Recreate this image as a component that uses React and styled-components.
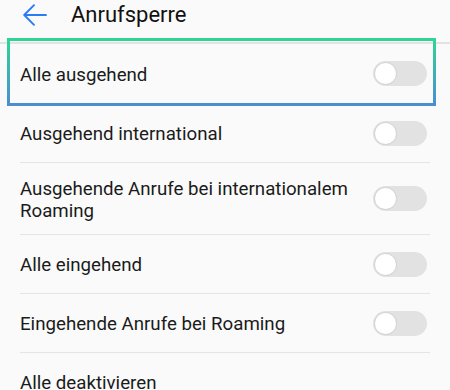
import styled, { createGlobalStyle } from 'styled-components';

const GlobalStyle = createGlobalStyle`
    html, body {
        margin: 0;
        padding: 0;
        background: #fafafa;
    }
    body {
        font-family: Roboto, "Noto Sans", "Liberation Sans", sans-serif;
        color: #1b1b1b;
    }
`;

const items = [
    { label: 'Alle ausgehend', toggle: true },
    { label: 'Ausgehend international', toggle: true },
    { label: 'Ausgehende Anrufe bei internationalem Roaming', toggle: true },
    { label: 'Alle eingehend', toggle: true },
    { label: 'Eingehende Anrufe bei Roaming', toggle: true },
    { label: 'Alle deaktivieren', toggle: false },
];

export default function App() {
    return (
        <Screen>
            <GlobalStyle />
            <Header>
                <BackButton aria-label="Zurück">
                    <svg width="24" height="22" viewBox="0 0 24 22" fill="none">
                        <path d="M23 11H1.8M11 1.2L1.2 11L11 20.8" stroke="#2b7cf4" strokeWidth="1.9" strokeLinecap="round" strokeLinejoin="round" />
                    </svg>
                </BackButton>
                <Title>Anrufsperre</Title>
            </Header>
            <List>
                {items.map(item => (
                    <Row key={item.label}>
                        <Label>{item.label}</Label>
                        {item.toggle && <Toggle />}
                    </Row>
                ))}
            </List>
            <Highlight />
        </Screen>
    )
}

const Screen = styled.main`
    position: relative;
    width: 450px;
    height: 390px;
    overflow: hidden;
    background: #fafafa;
`;

const Header = styled.header`
    height: 44px;
    box-sizing: border-box;
    padding: 0 0 12px 23px;
    display: flex;
    align-items: center;
    border-bottom: 2px solid #e3e3e3;
`;

const BackButton = styled.button`
    width: 24px;
    height: 22px;
    padding: 0;
    border: none;
    background: none;
    display: flex;
`;

const Title = styled.h1`
    margin: 0 0 0 24px;
    font-size: 22px;
    font-weight: 400;
    line-height: 26px;
    color: #111111;
`;

const List = styled.ul`
    list-style: none;
    margin: 0;
    padding: 0 20px;
`;

const Row = styled.li`
    min-height: 59px;
    box-sizing: border-box;
    padding: 12.5px 3px 12.5px 0;
    display: flex;
    align-items: center;
    gap: 16px;
    border-bottom: 1px solid #e4e4e4;

    &:first-child {
        min-height: 60px;
    }
`;

const Label = styled.span`
    flex: 1;
    padding-top: 2px;
    font-size: 18.7px;
    line-height: 22px;
    color: #1b1b1b;
`;

const Toggle = styled.span`
    position: relative;
    flex: none;
    width: 54px;
    height: 25px;
    border-radius: 13px;
    background: #e2e2e2;

    &::after {
        content: '';
        position: absolute;
        top: 2px;
        left: 2px;
        width: 21px;
        height: 21px;
        border-radius: 50%;
        background: #ffffff;
        box-shadow: 0 0 0 1px #d6d6d6;
    }
`;

const Highlight = styled.div`
    position: absolute;
    left: 7px;
    top: 38px;
    width: 429px;
    height: 68px;
    box-sizing: border-box;
    border: 3px solid;
    border-image: linear-gradient(180deg, #2fd496, #4a8fd0) 1;
    pointer-events: none;
`;
